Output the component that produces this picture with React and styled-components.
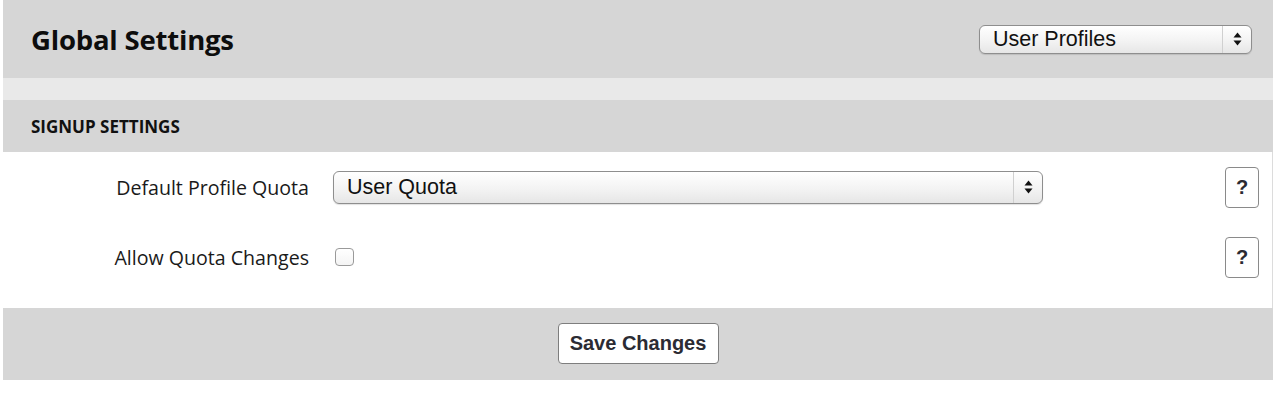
import React from "react";
import styled, { createGlobalStyle } from "styled-components";

const GlobalStyle = createGlobalStyle`
  html, body { margin: 0; padding: 0; background: #ffffff; }
  body { font-family: "Open Sans", "Liberation Sans", sans-serif; color: #111; }
`;

const Panel = styled.div`
  width: 1270px;
  margin-left: 3px;
  display: flex;
  flex-direction: column;
`;

const Header = styled.header`
  height: 78px;
  background: #d6d6d6;
  display: flex;
  align-items: center;
  justify-content: space-between;
  padding: 0 21px 0 28px;
  box-sizing: border-box;
`;

const Title = styled.h1`
  margin: 0;
  font-family: "Open Sans", sans-serif;
  font-weight: 700;
  font-size: 27.5px;
  color: #0d0d0d;
  letter-spacing: -0.2px;
`;

const Band = styled.div`
  height: 22px;
  background: #e9e9e9;
`;

const SectionHeader = styled.div`
  height: 52px;
  background: #d6d6d6;
  display: flex;
  align-items: center;
  padding-left: 28px;
  font-family: "Open Sans", sans-serif;
  font-weight: 700;
  font-size: 17px;
  text-transform: uppercase;
  color: #111;
`;

const Content = styled.div`
  background: #fff;
  border-right: 1px solid #dcdcdc;
  padding: 0 13px 16px 0;
  display: flex;
  flex-direction: column;
`;

const Row = styled.div`
  height: 70px;
  display: grid;
  grid-template-columns: 306px 1fr 34px;
  column-gap: 24px;
  align-items: center;
`;

const Label = styled.label`
  text-align: right;
  font-family: "Open Sans", sans-serif;
  font-size: 19.6px;
  color: #1a1a1a;
`;

const SelectBox = styled.div`
  width: ${(p) => p.$width}px;
  height: ${(p) => p.$height}px;
  box-sizing: border-box;
  display: flex;
  align-items: stretch;
  border: 1px solid #8e8e8e;
  border-radius: 6px;
  background: linear-gradient(#ffffff, #f3f3f3 55%, #e6e6e6);
  box-shadow: 0 1px 1px rgba(0, 0, 0, 0.12);
  font-family: "Liberation Sans", Arial, sans-serif;
  font-size: 21.5px;
  color: #111;
  cursor: default;
`;

const SelectValue = styled.span`
  flex: 1;
  display: flex;
  align-items: center;
  padding-left: 13px;
`;

const SelectArrow = styled.span`
  width: 28px;
  border-left: 1px solid #d0d0d0;
  display: flex;
  align-items: center;
  justify-content: center;
`;

const Checkbox = styled.span`
  width: 19px;
  height: 18px;
  box-sizing: border-box;
  border: 1px solid #9a9a9a;
  border-radius: 4px;
  background: linear-gradient(#ffffff, #f4f4f4);
  margin-left: 2px;
  display: block;
`;

const HelpButton = styled.button`
  width: 34px;
  height: 41px;
  box-sizing: border-box;
  border: 1px solid #8a8a8a;
  border-radius: 4px;
  background: #fff;
  font-family: "Liberation Sans", Arial, sans-serif;
  font-weight: 700;
  font-size: 20px;
  color: #2b2b33;
  padding: 0;
  cursor: pointer;
`;

const Footer = styled.footer`
  height: 72px;
  background: #d6d6d6;
  display: flex;
  align-items: center;
  justify-content: center;
  padding-bottom: 2px;
  box-sizing: border-box;
`;

const SaveButton = styled.button`
  width: 161px;
  height: 41px;
  box-sizing: border-box;
  border: 1px solid #7e7e7e;
  border-radius: 4px;
  background: #fff;
  font-family: "Liberation Sans", Arial, sans-serif;
  font-weight: 700;
  font-size: 20px;
  color: #2b2b33;
  padding: 0;
  cursor: pointer;
`;

const Arrows = () => (
  <svg width="9" height="14" viewBox="0 0 9 14">
    <path d="M4.5 0.5 L8.5 5.5 L0.5 5.5 Z" fill="#111" />
    <path d="M4.5 13.5 L8.5 8.5 L0.5 8.5 Z" fill="#111" />
  </svg>
);

const Select = ({ value, width, height }) => (
  <SelectBox $width={width} $height={height} role="combobox">
    <SelectValue>{value}</SelectValue>
    <SelectArrow>
      <Arrows />
    </SelectArrow>
  </SelectBox>
);

export default function App() {
  return (
    <>
      <GlobalStyle />
      <Panel>
        <Header>
          <Title>Global Settings</Title>
          <Select value="User Profiles" width={273} height={29} />
        </Header>
        <Band />
        <SectionHeader>Signup Settings</SectionHeader>
        <Content>
          <Row>
            <Label>Default Profile Quota</Label>
            <Select value="User Quota" width={710} height={33} />
            <HelpButton>?</HelpButton>
          </Row>
          <Row>
            <Label>Allow Quota Changes</Label>
            <Checkbox />
            <HelpButton>?</HelpButton>
          </Row>
        </Content>
        <Footer>
          <SaveButton>Save Changes</SaveButton>
        </Footer>
      </Panel>
    </>
  );
}
